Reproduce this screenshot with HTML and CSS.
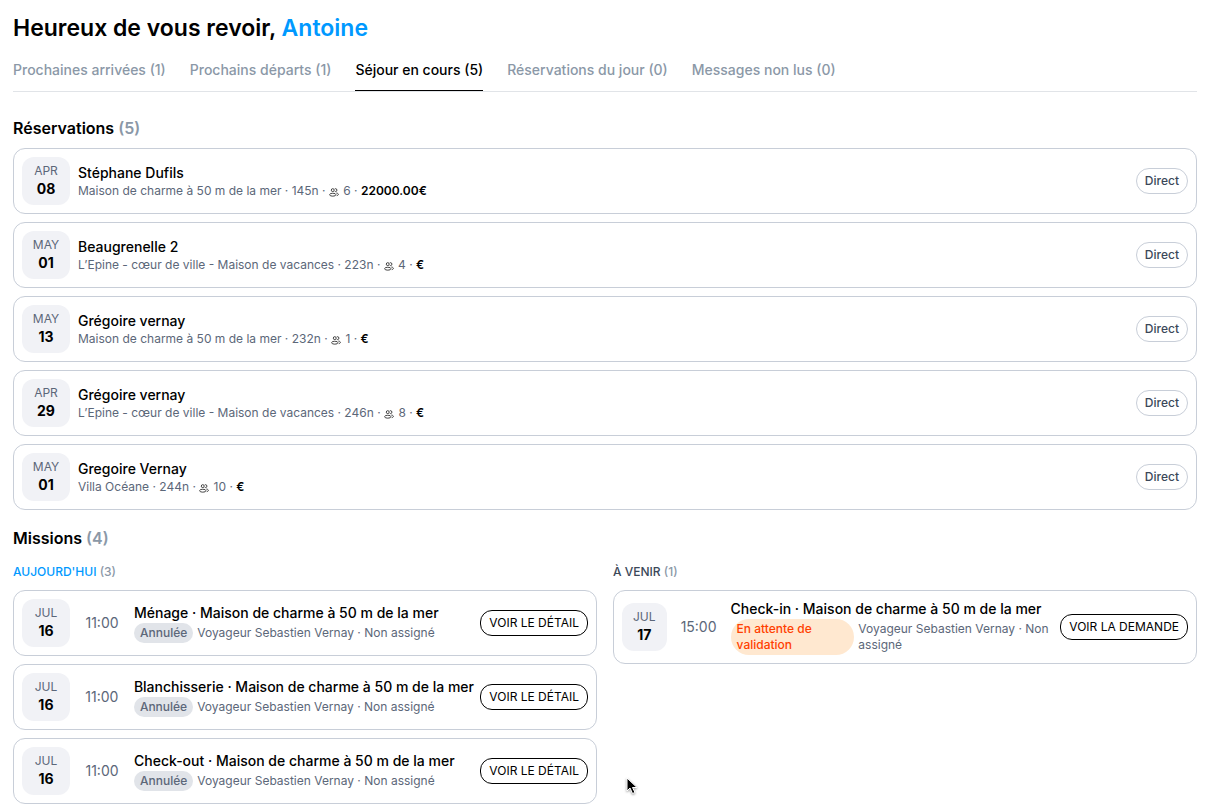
FILE: index.html
```html
<!DOCTYPE html>
<html lang="fr">
<head>
    <meta charset="UTF-8">
    <meta name="viewport" content="width=device-width, initial-scale=1.0">
    <title>Tableau de bord</title>
    <link rel="stylesheet" href="styles.css">
</head>

<body>
    <svg class="sprite" aria-hidden="true">
        <symbol id="guests" viewBox="0 0 24 24">
            <circle cx="9" cy="7.500" r="3.500" />
            <ellipse cx="9" cy="18.500" rx="7.500" ry="3.500" />
            <path d="M14 4h1.500a3.500 3.500 0 0 1 0 7H14M17.500 14.500c3 .3 5 1.500 5 3.200s-1.500 2.600-4 3" />
        </symbol>
    </svg>

    <main class="dashboard">
        <h1 class="welcome">Heureux de vous revoir, <span class="welcome-name">Antoine</span></h1>

        <nav class="tabs">
            <button class="tab" type="button">Prochaines arrivées (1)</button>
            <button class="tab" type="button">Prochains départs (1)</button>
            <button class="tab active" type="button">Séjour en cours (5)</button>
            <button class="tab" type="button">Réservations du jour (0)</button>
            <button class="tab" type="button">Messages non lus (0)</button>
        </nav>

        <section class="section">
            <h2 class="section-title">Réservations <span class="count">(5)</span></h2>
            <div class="card-list">
                <article class="card">
                    <div class="date"><span class="month">APR</span><span class="day">08</span></div>
                    <div class="card-body">
                        <h3 class="card-title">Stéphane Dufils</h3>
                        <p class="card-text">Maison de charme à 50 m de la mer · 145n · <svg class="icon"><use href="#guests" /></svg> 6 · <b class="price">22000.00€</b></p>
                    </div>
                    <span class="source">Direct</span>
                </article>
                <article class="card">
                    <div class="date"><span class="month">MAY</span><span class="day">01</span></div>
                    <div class="card-body">
                        <h3 class="card-title">Beaugrenelle 2</h3>
                        <p class="card-text">L’Epine - cœur de ville - Maison de vacances · 223n · <svg class="icon"><use href="#guests" /></svg> 4 · <b class="price">€</b></p>
                    </div>
                    <span class="source">Direct</span>
                </article>
                <article class="card">
                    <div class="date"><span class="month">MAY</span><span class="day">13</span></div>
                    <div class="card-body">
                        <h3 class="card-title">Grégoire vernay</h3>
                        <p class="card-text">Maison de charme à 50 m de la mer · 232n · <svg class="icon"><use href="#guests" /></svg> 1 · <b class="price">€</b></p>
                    </div>
                    <span class="source">Direct</span>
                </article>
                <article class="card">
                    <div class="date"><span class="month">APR</span><span class="day">29</span></div>
                    <div class="card-body">
                        <h3 class="card-title">Grégoire vernay</h3>
                        <p class="card-text">L’Epine - cœur de ville - Maison de vacances · 246n · <svg class="icon"><use href="#guests" /></svg> 8 · <b class="price">€</b></p>
                    </div>
                    <span class="source">Direct</span>
                </article>
                <article class="card">
                    <div class="date"><span class="month">MAY</span><span class="day">01</span></div>
                    <div class="card-body">
                        <h3 class="card-title">Gregoire Vernay</h3>
                        <p class="card-text">Villa Océane · 244n · <svg class="icon"><use href="#guests" /></svg> 10 · <b class="price">€</b></p>
                    </div>
                    <span class="source">Direct</span>
                </article>
            </div>
        </section>

        <section class="section">
            <h2 class="section-title">Missions <span class="count">(4)</span></h2>
            <div class="missions">
                <div class="mission-column">
                    <h3 class="column-title today">AUJOURD'HUI <span class="count">(3)</span></h3>
                    <div class="card-list">
                        <article class="card">
                            <div class="date"><span class="month">JUL</span><span class="day">16</span></div>
                            <time class="hour">11:00</time>
                            <div class="card-body">
                                <h4 class="card-title">Ménage · Maison de charme à 50 m de la mer</h4>
                                <div class="mission-info">
                                    <span class="status cancelled">Annulée</span>
                                    <p class="card-text">Voyageur Sebastien Vernay · Non assigné</p>
                                </div>
                            </div>
                            <button class="action" type="button">VOIR LE DÉTAIL</button>
                        </article>
                        <article class="card">
                            <div class="date"><span class="month">JUL</span><span class="day">16</span></div>
                            <time class="hour">11:00</time>
                            <div class="card-body">
                                <h4 class="card-title">Blanchisserie · Maison de charme à 50 m de la mer</h4>
                                <div class="mission-info">
                                    <span class="status cancelled">Annulée</span>
                                    <p class="card-text">Voyageur Sebastien Vernay · Non assigné</p>
                                </div>
                            </div>
                            <button class="action" type="button">VOIR LE DÉTAIL</button>
                        </article>
                        <article class="card">
                            <div class="date"><span class="month">JUL</span><span class="day">16</span></div>
                            <time class="hour">11:00</time>
                            <div class="card-body">
                                <h4 class="card-title">Check-out · Maison de charme à 50 m de la mer</h4>
                                <div class="mission-info">
                                    <span class="status cancelled">Annulée</span>
                                    <p class="card-text">Voyageur Sebastien Vernay · Non assigné</p>
                                </div>
                            </div>
                            <button class="action" type="button">VOIR LE DÉTAIL</button>
                        </article>
                    </div>
                </div>

                <div class="mission-column">
                    <h3 class="column-title">À VENIR <span class="count">(1)</span></h3>
                    <div class="card-list">
                        <article class="card">
                            <div class="date"><span class="month">JUL</span><span class="day">17</span></div>
                            <time class="hour">15:00</time>
                            <div class="card-body">
                                <h4 class="card-title">Check-in · Maison de charme à 50 m de la mer</h4>
                                <div class="mission-info">
                                    <span class="status pending">En attente de validation</span>
                                    <p class="card-text">Voyageur Sebastien Vernay · Non assigné</p>
                                </div>
                            </div>
                            <button class="action" type="button">VOIR LA DEMANDE</button>
                        </article>
                    </div>
                </div>
            </div>
        </section>
    </main>

    <svg class="pointer" viewBox="0 0 12 18" aria-hidden="true">
        <path d="M1 1v13l3-3 2.500 5.500 2.500-1L6.500 10.500H11z" />
    </svg>
</body>
</html>
```
FILE: styles.css
```css
* {
    margin: 0;
    padding: 0;
    box-sizing: border-box;
}

body {
    font-family: "Inter", "Liberation Sans", sans-serif;
    font-size: 14px;
    line-height: 20px;
    color: #000;
    background-color: #fff;
}

button {
    font-family: inherit;
    background: none;
    border: none;
    cursor: pointer;
}

.sprite {
    display: none;
}

.dashboard {
    padding: 12px 9px 5px 13px;
}

.welcome {
    font-size: 23px;
    line-height: 32px;
    font-weight: 600;
    margin-bottom: 16px;
}

.welcome-name {
    color: #0099ff;
}

.tabs {
    display: flex;
    gap: 24px;
    border-bottom: 1px solid #e1e4e8;
    margin-bottom: 24px;
}

.tab {
    font-size: 14px;
    line-height: 20px;
    font-weight: 500;
    color: #8b98a7;
    padding-bottom: 10px;
    border-bottom: 1px solid transparent;
}

.tab.active {
    color: #000;
    border-bottom-color: #000;
}

.section {
    margin-bottom: 16px;
}

.section:last-child {
    margin-bottom: 0;
}

.section-title {
    font-size: 16px;
    line-height: 24px;
    font-weight: 600;
    margin-bottom: 8px;
}

.count {
    color: #8b98a7;
}

.card-list {
    display: flex;
    flex-direction: column;
    gap: 8px;
}

.card {
    display: flex;
    align-items: center;
    gap: 8px;
    padding: 8px;
    border: 1px solid #c8ced8;
    border-radius: 12px;
}

.date {
    display: flex;
    flex-direction: column;
    align-items: center;
    width: 48px;
    padding: 6px 11px;
    border-radius: 12px;
    background-color: #f1f2f6;
}

.month {
    font-size: 12px;
    line-height: 16px;
    color: #5c6779;
}

.day {
    font-weight: 700;
}

.hour {
    flex: none;
    width: 48px;
    text-align: center;
    color: #5c6779;
}

.card-body {
    flex: 1 1 auto;
    min-width: 0;
}

.card-title {
    font-size: 14px;
    font-weight: 500;
    white-space: nowrap;
}

.card-text {
    font-size: 12px;
    line-height: 16px;
    color: #5c6779;
}

.price {
    font-weight: 600;
    color: #000;
}

.icon {
    width: 10px;
    height: 10px;
    margin-right: 1px;
    vertical-align: -2px;
    fill: none;
    stroke: #222;
    stroke-width: 2;
}

.source {
    font-size: 12px;
    line-height: 16px;
    font-weight: 500;
    color: #3b4859;
    padding: 4px 8px;
    border: 1px solid #c8ced8;
    border-radius: 13px;
}

.missions {
    display: grid;
    grid-template-columns: 1fr 1fr;
    gap: 16px;
    margin-top: 14px;
}

.column-title {
    font-size: 12px;
    line-height: 16px;
    font-weight: 500;
    color: #3b4859;
    margin-bottom: 10px;
}

.column-title.today {
    color: #0099ff;
}

.mission-info {
    display: flex;
    align-items: center;
    gap: 4px;
}

.status {
    flex-shrink: 0.9;
    font-size: 12px;
    line-height: 16px;
    font-weight: 500;
    padding: 2px 6px;
    border-radius: 18px;
}

.status.cancelled {
    color: #5c6779;
    background-color: #e1e4e9;
}

.status.pending {
    color: #ff4000;
    background-color: #ffe8d0;
}

.action {
    flex: none;
    font-size: 12px;
    line-height: 16px;
    color: #000;
    padding: 4px 8px;
    border: 1px solid #000;
    border-radius: 12px;
}

.pointer {
    position: absolute;
    top: 777px;
    left: 626px;
    width: 12px;
    height: 18px;
    stroke: #fff;
    filter: drop-shadow(0 1px 1px rgba(0, 0, 0, 0.4));
}
```
